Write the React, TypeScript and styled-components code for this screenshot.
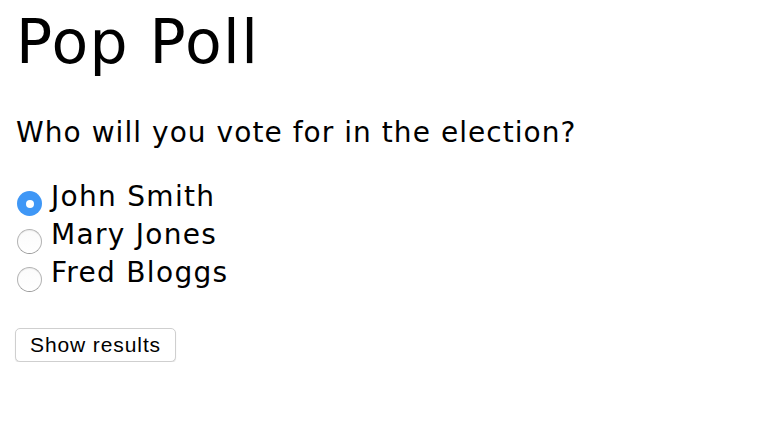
import React, { useState } from 'react';
import styled, { createGlobalStyle } from 'styled-components';

const GlobalStyle = createGlobalStyle`
  body {
    margin: 0;
    background: #fff;
    color: #000;
    font-family: "DejaVu Sans", "Liberation Sans", sans-serif;
  }
`;

const Page = styled.div`
  padding: 12px 16px 0 16px;
`;

const Title = styled.h1`
  margin: 0;
  font-size: 60px;
  line-height: 60px;
  font-weight: normal;
  letter-spacing: 1.4px;
`;

const Question = styled.p`
  margin: 47px 0 0 0;
  font-size: 28px;
  line-height: 28px;
  letter-spacing: 1.05px;
`;

const Options = styled.div`
  margin-top: 31px;
  display: flex;
  flex-direction: column;
`;

const Option = styled.label`
  display: flex;
  align-items: flex-end;
  height: 38px;
  font-size: 28px;
  line-height: 38px;
  letter-spacing: 1.3px;
  cursor: pointer;
`;

const Radio = styled.input`
  appearance: none;
  -webkit-appearance: none;
  box-sizing: border-box;
  width: 25px;
  height: 25px;
  margin: 0 9px 0 1px;
  border-radius: 50%;
  border: 1px solid #b4b4b4;
  border-bottom-color: #9a9a9a;
  background: linear-gradient(#fbfbfb, #ffffff);
  box-shadow: inset 0 1px 1px rgba(0, 0, 0, 0.06);
  flex-shrink: 0;
  position: relative;

  &:checked {
    border: none;
    background: #3f97f6;
    box-shadow: none;
  }

  &:checked::after {
    content: '';
    position: absolute;
    left: 8.5px;
    top: 8.5px;
    width: 8px;
    height: 8px;
    border-radius: 50%;
    background: #fff;
  }
`;

const ResultsButton = styled.button`
  margin: 36px 0 0 -1px;
  height: 34px;
  padding: 0 14px;
  box-sizing: border-box;
  background: #fff;
  border: 1px solid #cfcfcf;
  border-radius: 5px;
  box-shadow: 0 1px 1px rgba(0, 0, 0, 0.12);
  font-family: "Liberation Sans", Arial, sans-serif;
  font-size: 21px;
  letter-spacing: 0.9px;
  color: #000;
  cursor: pointer;
`;

const candidates = ['John Smith', 'Mary Jones', 'Fred Bloggs'];

const App = () => {
  const [choice, setChoice] = useState(candidates[0]);

  return (
    <Page>
      <GlobalStyle />
      <Title>Pop Poll</Title>
      <Question>Who will you vote for in the election?</Question>
      <Options>
        {candidates.map((name) => (
          <Option key={name}>
            <Radio
              type="radio"
              name="vote"
              checked={choice === name}
              onChange={() => setChoice(name)}
            />
            {name}
          </Option>
        ))}
      </Options>
      <ResultsButton>Show results</ResultsButton>
    </Page>
  );
};

export default App;
